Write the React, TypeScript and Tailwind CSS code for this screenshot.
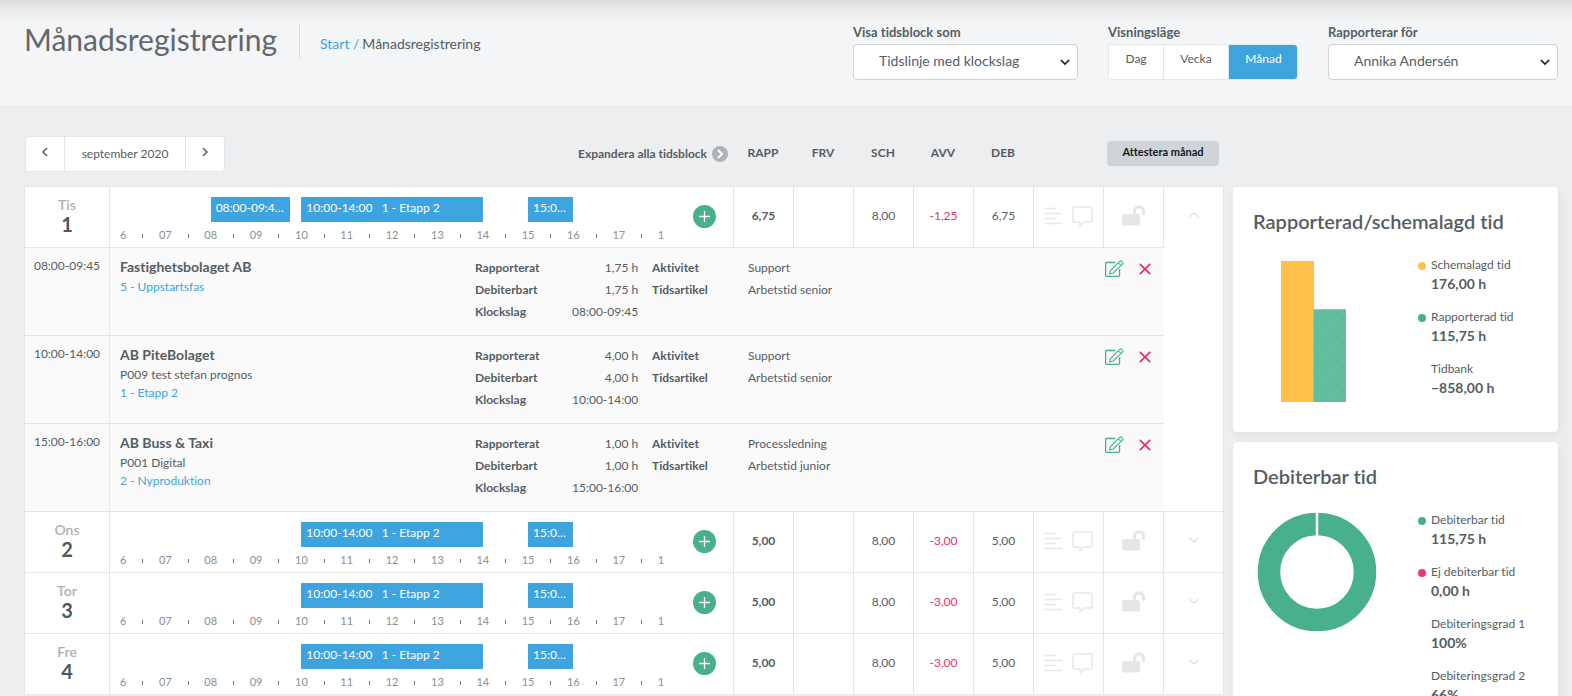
import React, { useState } from 'react';
import clsx from 'clsx';

interface Block {
  start: number;
  end: number;
  time: string;
  phase?: string;
}

interface TimeEntry {
  time: string;
  customer: string;
  project?: string;
  phase: string;
  hours: string;
  activity: string;
  article: string;
}

interface Day {
  name: string;
  date: number;
  rapp: string;
  sch: string;
  avv: string;
  deb: string;
  blocks: Block[];
  entries: TimeEntry[];
}

const morning: Block = { start: 8, end: 9.75, time: '08:00-09:45', phase: '5 - Uppstartsfas' };
const midday: Block = { start: 10, end: 14, time: '10:00-14:00', phase: '1 - Etapp 2' };
const afternoon: Block = { start: 15, end: 16, time: '15:00-16:00' };

const days: Day[] = [
  {
    name: 'Tis',
    date: 1,
    rapp: '6,75',
    sch: '8,00',
    avv: '-1,25',
    deb: '6,75',
    blocks: [morning, midday, afternoon],
    entries: [
      { time: '08:00-09:45', customer: 'Fastighetsbolaget AB', phase: '5 - Uppstartsfas', hours: '1,75 h', activity: 'Support', article: 'Arbetstid senior' },
      { time: '10:00-14:00', customer: 'AB PiteBolaget', project: 'P009 test stefan prognos', phase: '1 - Etapp 2', hours: '4,00 h', activity: 'Support', article: 'Arbetstid senior' },
      { time: '15:00-16:00', customer: 'AB Buss & Taxi', project: 'P001 Digital', phase: '2 - Nyproduktion', hours: '1,00 h', activity: 'Processledning', article: 'Arbetstid junior' },
    ],
  },
  { name: 'Ons', date: 2, rapp: '5,00', sch: '8,00', avv: '-3,00', deb: '5,00', blocks: [midday, afternoon], entries: [] },
  { name: 'Tor', date: 3, rapp: '5,00', sch: '8,00', avv: '-3,00', deb: '5,00', blocks: [midday, afternoon], entries: [] },
  { name: 'Fre', date: 4, rapp: '5,00', sch: '8,00', avv: '-3,00', deb: '5,00', blocks: [midday, afternoon], entries: [] },
];

const FIRST_HOUR = 6;
const LAST_HOUR = 18;

const Chevron = ({ direction, size = 10, width = 1.5 }: { direction: 'up' | 'down' | 'left' | 'right'; size?: number; width?: number }) => {
  const paths = {
    up: 'M.5 7.300 5 2.700l4.500 4.600',
    down: 'M.9 3l4.100 4.100L9.100 3',
    left: 'M7 1 3 5l4 4',
    right: 'M3 1l4 4-4 4',
  };
  return (
    <svg width={size} height={size} viewBox="0 0 10 10" fill="none" stroke="currentColor" strokeWidth={width} aria-hidden="true">
      <path d={paths[direction]} />
    </svg>
  );
};

const LinesIcon = () => (
  <svg width="18" height="18" viewBox="0 0 18 18" stroke="currentColor" strokeWidth="1.700" strokeLinecap="round" aria-hidden="true">
    <path d="M1 1.500h10M1 6.500h16M1 11.500h10M1 16.500h16" />
  </svg>
);

const CommentIcon = () => (
  <svg width="21" height="21" viewBox="0 0 21 21" fill="none" stroke="currentColor" strokeWidth="1.500" strokeLinejoin="round" aria-hidden="true">
    <path d="M2.500 1h16A1.500 1.500 0 0 1 20 2.500v12a1.500 1.500 0 0 1-1.500 1.500H12l-4 3.900V16H2.500A1.500 1.500 0 0 1 1 14.500v-12A1.500 1.500 0 0 1 2.500 1z" />
  </svg>
);

const UnlockIcon = () => (
  <svg width="23" height="21" viewBox="0 0 23 21" aria-hidden="true">
    <rect x="0" y="9" width="18" height="11.500" rx="2" fill="currentColor" />
    <path d="M12.500 10V6.300a4.500 4.500 0 0 1 9 0V8.500" fill="none" stroke="currentColor" strokeWidth="3" strokeLinecap="round" />
  </svg>
);

const EditIcon = () => (
  <svg width="19" height="17" viewBox="0 0 19 17" fill="none" stroke="currentColor" aria-hidden="true">
    <path d="M10.500 2.500H1.600a1 1 0 0 0-1 1V15.300a1 1 0 0 0 1 1h12a1 1 0 0 0 1-1V9" strokeWidth="1.300" />
    <path d="M14.600 1.400a1.500 1.500 0 0 1 2.100 0l.7.7a1.500 1.500 0 0 1 0 2.100L8.300 13l-3.600.9.900-3.600zM13.200 2.800l2.800 2.800" strokeWidth="1.100" />
  </svg>
);

const CrossIcon = () => (
  <svg width="12" height="12" viewBox="0 0 12 12" stroke="currentColor" strokeWidth="1.800" aria-hidden="true">
    <path d="M.8.8l10.400 10.400M11.200.8.8 11.200" />
  </svg>
);

const Timeline = ({ blocks }: { blocks: Block[] }) => {
  const steps = (LAST_HOUR - FIRST_HOUR) * 2;
  return (
    <div className="overflow-hidden">
      <div className="grid h-[25px] grid-cols-[repeat(48,minmax(0,1fr))]">
        {blocks.map((block) => (
          <div
            key={block.time}
            className="row-start-1 h-[25px] overflow-hidden bg-[#3ea4df] pr-[3px] pl-[5px] text-xs leading-[22px] text-ellipsis whitespace-pre text-white"
            style={{ gridColumn: `${(block.start - FIRST_HOUR) * 4 + 1} / ${(block.end - FIRST_HOUR) * 4 + 1}` }}
          >
            {block.phase ? `${block.time}   ${block.phase}` : block.time}
          </div>
        ))}
      </div>
      <div className="-mx-[2.0833%] mt-1 flex h-[18px] items-center text-[11px] text-[#8b9094]">
        {Array.from({ length: steps + 1 }, (_, i) => (
          <span key={i} className="flex min-w-0 flex-1 justify-center">
            {i % 2 === 0 ? String(FIRST_HOUR + i / 2).padStart(2, '0') : <span className="mt-px h-1 w-px bg-[#6b7278]" />}
          </span>
        ))}
      </div>
    </div>
  );
};

const valueCell = 'border-r border-b border-[#e6e6e6] bg-white pb-0.5 text-center text-xs';

const DayRows = ({ day }: { day: Day }) => {
  const [expanded, setExpanded] = useState(day.entries.length > 0);
  const shown = expanded ? day.entries : [];

  return (
    <>
      <tr className="h-[61px]">
        <th scope="row" className="border-r border-b border-l border-[#e6e6e6] bg-white pb-[3px] text-center font-normal">
          <div className="text-sm leading-4 font-semibold text-[#a9b0b3]">{day.name}</div>
          <div className="text-xl leading-[22px] font-bold text-[#50585f]">{day.date}</div>
        </th>
        <td className="border-b border-[#e6e6e6] bg-white px-2.5 pt-2.5 align-top">
          <Timeline blocks={day.blocks} />
        </td>
        <td className="border-r border-b border-[#e6e6e6] bg-white pb-0.5 pl-px">
          <button aria-label="Lägg till tid" className="mx-auto flex h-[23px] w-[23px] items-center justify-center rounded-full bg-[#48b08c] text-white">
            <svg width="11" height="11" viewBox="0 0 11 11" stroke="currentColor" strokeWidth="1.300" aria-hidden="true">
              <path d="M5.500 0v11M0 5.500h11" />
            </svg>
          </button>
        </td>
        <td className={clsx(valueCell, 'font-bold')}>{day.rapp}</td>
        <td className={valueCell} />
        <td className={valueCell}>{day.sch}</td>
        <td className={clsx(valueCell, 'text-[#e5326f]')}>{day.avv}</td>
        <td className={valueCell}>{day.deb}</td>
        <td className={valueCell}>
          <div className="flex items-center justify-center gap-2.5 text-[#e8e8e8]">
            <button aria-label="Anteckningar"><LinesIcon /></button>
            <button aria-label="Kommentar"><CommentIcon /></button>
          </div>
        </td>
        <td className={clsx(valueCell, 'pb-1')}>
          <button aria-label="Lås dag" className="block w-full text-[#e6e6e6]">
            <span className="flex justify-center"><UnlockIcon /></span>
          </button>
        </td>
        <td rowSpan={shown.length + 1} className={clsx(valueCell, 'align-top')}>
          <button
            aria-label={expanded ? 'Dölj tidsblock' : 'Visa tidsblock'}
            onClick={() => setExpanded(!expanded)}
            className="flex h-[55px] w-full items-center justify-center text-[#dfdfdf]"
          >
            <Chevron direction={expanded ? 'up' : 'down'} width={1.2} />
          </button>
        </td>
      </tr>
      {shown.map((entry) => (
        <tr key={entry.time} className="h-[88px]">
          <td className="border-r border-b border-l border-[#e6e6e6] bg-[#fafafa] pt-2 text-center align-top text-xs leading-5">{entry.time}</td>
          <td colSpan={9} className="border-b border-[#e6e6e6] bg-[#fafafa] pl-2.5 align-top">
            <div className="flex">
              <div className="min-w-0 flex-1 pt-[9px] text-xs leading-[18px]">
                <div className="mb-0.5 text-sm leading-[19px] font-bold">{entry.customer}</div>
                {entry.project && <div>{entry.project}</div>}
                <a href="#" className="text-[#3ea4df]">{entry.phase}</a>
              </div>
              <dl className="grid w-[177px] grid-cols-[97px_max-content] content-start pt-[9px] text-xs leading-[22px]">
                <dt className="font-bold">Rapporterat</dt>
                <dd className="text-right">{entry.hours}</dd>
                <dt className="font-bold">Debiterbart</dt>
                <dd className="text-right">{entry.hours}</dd>
                <dt className="font-bold">Klockslag</dt>
                <dd className="text-right">{entry.time}</dd>
              </dl>
              <dl className="grid w-[453px] grid-cols-[96px_1fr] content-start pt-[9px] text-xs leading-[22px]">
                <dt className="font-bold">Aktivitet</dt>
                <dd>{entry.activity}</dd>
                <dt className="font-bold">Tidsartikel</dt>
                <dd>{entry.article}</dd>
              </dl>
              <div className="flex w-[59px] items-center gap-[15px] self-start pt-3">
                <button aria-label="Redigera" className="text-[#48b08c]"><EditIcon /></button>
                <button aria-label="Ta bort" className="text-[#e5326f]"><CrossIcon /></button>
              </div>
            </div>
          </td>
        </tr>
      ))}
    </>
  );
};

const LegendItem = ({ label, value, dot }: { label: string; value: string; dot?: string }) => (
  <li className="flex gap-[5px]">
    <span className={clsx('mt-1.5 h-2 w-2 rounded-full', dot)} />
    <div>
      <div className="text-xs leading-[18px]">{label}</div>
      <div className="text-sm leading-5 font-bold">{value}</div>
    </div>
  </li>
);

const Card = ({ title, children }: { title: string; children: React.ReactNode }) => (
  <section className="min-h-[245px] rounded bg-white px-5 pt-[19px] pb-[29px] shadow-[2px_3px_10px_rgba(0,0,0,0.06)]">
    <h2 className="text-xl leading-[30px] font-semibold">{title}</h2>
    <div className="mt-5 flex justify-between pr-3">{children}</div>
  </section>
);

const SelectField = ({ id, label, value, className }: { id: string; label: string; value: string; className: string }) => (
  <div className={className}>
    <label htmlFor={id} className="block text-[13px] leading-5 font-bold">{label}</label>
    <div className="relative mt-0.5">
      <select id={id} defaultValue={value} className="h-9 w-full appearance-none rounded border border-[#cdd3d8] bg-white px-[25px] pb-0.5 text-sm">
        <option>{value}</option>
      </select>
      <span className="pointer-events-none absolute top-[13px] right-2 text-[#1c1f22]">
        <Chevron direction="down" width={1.7} />
      </span>
    </div>
  </div>
);

export default function App() {
  const [mode, setMode] = useState('Månad');
  const modes = ['Dag', 'Vecka', 'Månad'];

  return (
    <div className="flex h-screen flex-col overflow-hidden bg-[#edeef0] font-['Lato','Open_Sans',sans-serif] text-[#555d64] [font-variant-ligatures:none]">
      {/* Page header */}
      <header className="flex h-[105px] shrink-0 items-start justify-between bg-[#f3f5f7] bg-[linear-gradient(to_bottom,#dbdcde_0px,#e6e8ea_8px,#f3f5f7_23px)] pt-[22px] pr-3.5 pl-6">
        <div className="mt-px flex items-start">
          <h1 className="text-[30px] leading-8 text-[#62686e]">Månadsregistrering</h1>
          <nav className="ml-[22px] flex h-9 items-center border-l border-[#d9dcdf] pt-1.5 pl-5 text-sm" aria-label="Brödsmulor">
            <a href="#" className="text-[#3ea4df]">Start /</a>
            <span className="ml-[3px]">Månadsregistrering</span>
          </nav>
        </div>
        <div className="flex gap-[30px]">
          <SelectField id="block-view" label="Visa tidsblock som" value="Tidslinje med klockslag" className="w-[225px]" />
          <div role="group" aria-labelledby="mode-label">
            <div id="mode-label" className="text-[13px] leading-5 font-bold">Visningsläge</div>
            <div className="mt-0.5 flex h-9 overflow-hidden rounded border border-[#e3e6e8] bg-white">
              {modes.map((item) => (
                <button
                  key={item}
                  onClick={() => setMode(item)}
                  className={clsx(
                    '-my-px border-r border-[#e3e6e8] pb-1.5 text-xs last:-mr-px last:border-r-0',
                    item === 'Dag' && 'w-[55px]',
                    item === 'Vecka' && 'w-[65px]',
                    item === 'Månad' && 'w-[69px]',
                    mode === item ? 'bg-[#3ea4df] text-white' : 'bg-white'
                  )}
                >
                  {item}
                </button>
              ))}
            </div>
          </div>
          <SelectField id="reporter" label="Rapporterar för" value="Annika Andersén" className="w-[230px]" />
        </div>
      </header>

      <main className="flex min-h-0 flex-1 items-start gap-[9px] pt-[30px] pr-3.5 pl-6">
        {/* Month table */}
        <table className="min-w-0 flex-1 table-fixed border-separate border-spacing-0">
          <colgroup>
            <col className="w-[86px]" />
            <col />
            <col className="w-[60px]" />
            <col className="w-[60px]" />
            <col className="w-[60px]" />
            <col className="w-[60px]" />
            <col className="w-[60px]" />
            <col className="w-[60px]" />
            <col className="w-[70px]" />
            <col className="w-[60px]" />
            <col className="w-[60px]" />
          </colgroup>
          <thead>
            <tr className="h-[52px] text-xs [&>th]:border-b [&>th]:border-[#e6e6e6] [&>th]:align-top">
              <th colSpan={3} className="font-normal">
                <div className="flex items-start justify-between pr-1.5">
                  <div className="mt-px ml-px flex h-9 rounded border border-[#e3e6e8] bg-white">
                    <button aria-label="Föregående månad" className="flex w-[39px] items-center justify-center border-r border-[#e3e6e8] pb-1">
                      <Chevron direction="left" />
                    </button>
                    <span className="w-[120px] text-center leading-[33px]">september 2020</span>
                    <button aria-label="Nästa månad" className="flex w-[39px] items-center justify-center border-l border-[#e3e6e8] pb-1">
                      <Chevron direction="right" />
                    </button>
                  </div>
                  <button className="mt-[9px] flex items-center gap-[5px] leading-5 font-bold">
                    Expandera alla tidsblock
                    <span className="flex h-4 w-4 items-center justify-center rounded-full bg-[#adb2b4] text-white">
                      <Chevron direction="right" width={2} />
                    </span>
                  </button>
                </div>
              </th>
              {['RAPP', 'FRV', 'SCH', 'AVV', 'DEB'].map((heading) => (
                <th key={heading} scope="col" className="pt-2 pr-0.5 leading-5 font-bold">{heading}</th>
              ))}
              <th />
              <th colSpan={2} className="pt-1.5">
                <button className="ml-[3px] block h-[25px] w-[112px] rounded bg-[#ced4d8] pb-[3px] text-[11px] font-bold text-[#15191c]">Attestera månad</button>
              </th>
            </tr>
          </thead>
          <tbody>
            {days.map((day) => (
              <DayRows key={day.date} day={day} />
            ))}
          </tbody>
        </table>

        {/* Summary */}
        <aside className="mt-[52px] flex w-[325px] shrink-0 flex-col gap-2.5">
          <Card title="Rapporterad/schemalagd tid">
            <svg width="66" height="141" viewBox="0 0 66 141" className="mt-[5px] ml-7" role="img" aria-label="Schemalagd 176,00 h, rapporterad 115,75 h">
              <defs>
                <pattern id="dots" width="13" height="12" patternUnits="userSpaceOnUse">
                  <rect width="13" height="12" fill="#63be9e" />
                  <rect x="3" y="4" width="1" height="1" fill="#48b08c" />
                  <rect x="9" y="9" width="1" height="1" fill="#48b08c" />
                </pattern>
              </defs>
              <rect width="33" height="141" fill="#fec24a" />
              <rect x="33" y="48" width="32" height="93" fill="url(#dots)" />
              <path d="M32.500 141V48.500H65" fill="none" stroke="#b5b5a0" />
            </svg>
            <ul className="flex w-[108px] flex-col gap-3.5 whitespace-nowrap">
              <LegendItem dot="bg-[#fec24a]" label="Schemalagd tid" value="176,00 h" />
              <LegendItem dot="bg-[#48b08c]" label="Rapporterad tid" value="115,75 h" />
              <LegendItem label="Tidbank" value="−858,00 h" />
            </ul>
          </Card>
          <Card title="Debiterbar tid">
            <svg width="120" height="120" viewBox="0 0 120 120" className="mt-px ml-1" role="img" aria-label="Debiterbar tid 115,75 h">
              <circle cx="60" cy="60" r="48" fill="none" stroke="#48b08c" strokeWidth="22.500" />
              <path d="M60 0v24" stroke="#fff" strokeWidth="2.500" />
            </svg>
            <ul className="flex w-[108px] flex-col gap-3.5 whitespace-nowrap">
              <LegendItem dot="bg-[#48b08c]" label="Debiterbar tid" value="115,75 h" />
              <LegendItem dot="bg-[#e83a78]" label="Ej debiterbar tid" value="0,00 h" />
              <LegendItem label="Debiteringsgrad 1" value="100%" />
              <LegendItem label="Debiteringsgrad 2" value="66%" />
            </ul>
          </Card>
        </aside>
      </main>
    </div>
  );
}
